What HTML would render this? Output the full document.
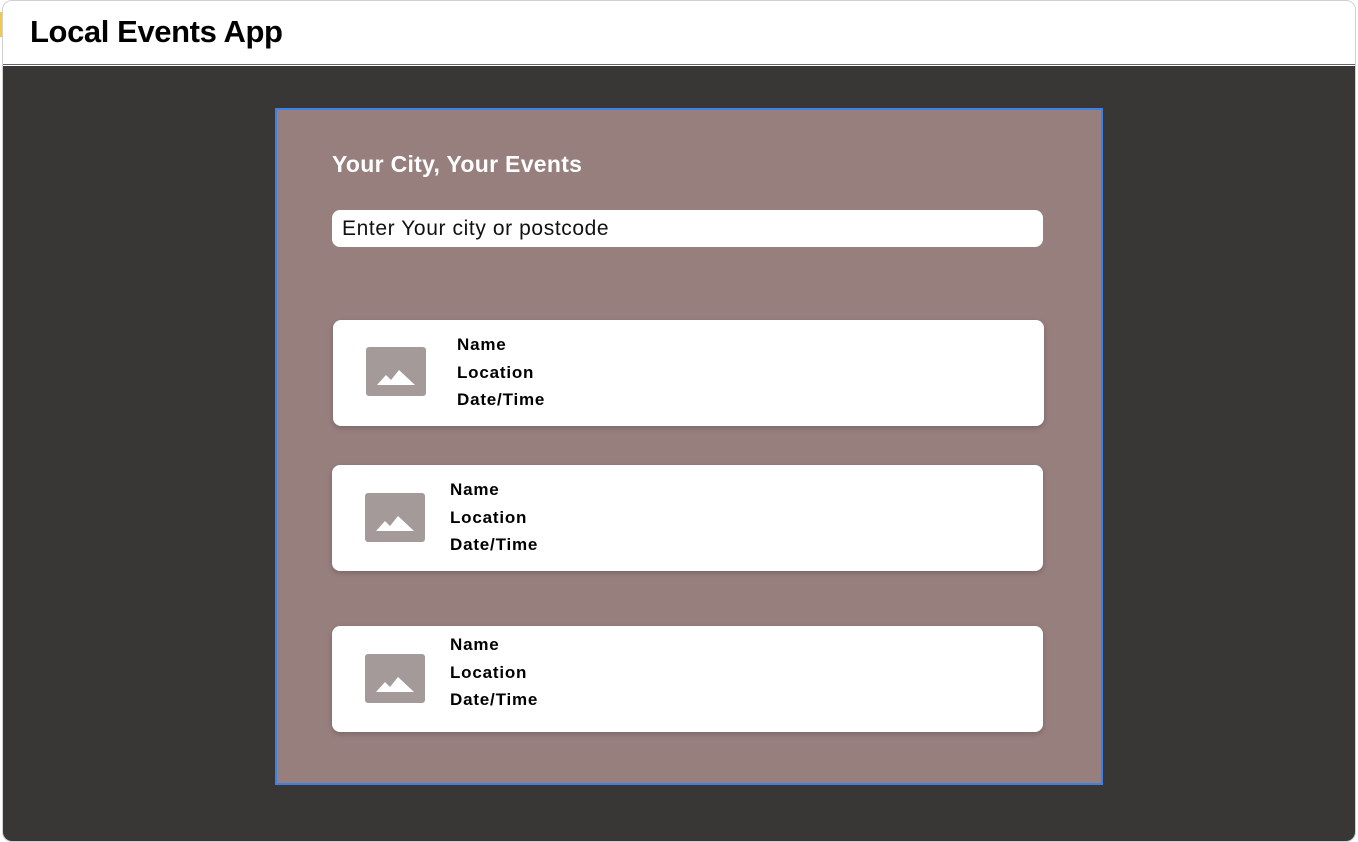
<!DOCTYPE html>
<html><head><style>
*{margin:0;padding:0;box-sizing:border-box}
body{width:1358px;height:842px;background:#fff;position:relative;overflow:hidden;font-family:"Liberation Sans",Roboto,sans-serif}
.frame{position:absolute;left:2px;top:0;width:1354px;height:842px;border:1px solid #d0d0d0;border-radius:10px;overflow:hidden;background:#fff}
.yellow{position:absolute;left:0;top:12px;width:3px;height:25px;background:#f5c842}
.hdr{position:absolute;left:0;top:0;width:100%;height:64px;background:#fff;border-bottom:1px solid #666}
.hdr h1{position:absolute;left:27px;top:13px;font-size:31px;font-weight:bold;color:#000;letter-spacing:-0.4px}
.dark{position:absolute;left:0;top:65px;width:100%;height:777px;background:#393735}
.panel{position:absolute;left:275px;top:108px;width:828px;height:677px;background:#977f7e;border:2px solid #3b82e8}
.title{position:absolute;left:332px;top:151px;color:#fff;font-size:23px;font-weight:bold;letter-spacing:0.3px}
.input{position:absolute;left:332px;top:210px;width:711px;height:37px;background:#fff;border-radius:8px;font-size:21px;color:#111;padding:7px 0 0 10px;letter-spacing:0.6px}
.card{position:absolute;width:711px;height:106px;background:#fff;border-radius:8px;box-shadow:0 2px 6px rgba(0,0,0,.2)}
.ic{position:absolute;left:33px;top:27px;width:60px;height:49px;background:#a49a99;border-radius:3px}
.ic svg{position:absolute;left:11px;top:20px}
.txt{position:absolute;font-size:17px;font-weight:bold;color:#000;line-height:27.5px;letter-spacing:0.8px}
</style></head><body>
<div class="yellow"></div>
<div class="frame">
<div class="hdr"><h1>Local Events App</h1></div>
<div class="dark"></div>
</div>
<div class="panel"></div>
<div class="title">Your City, Your Events</div>
<div class="input">Enter Your city or postcode</div>

<div class="card" style="left:333px;top:320px"><div class="ic"><svg width="38" height="18" viewBox="0 0 38 18"><path d="M0 18 L9 8 L14 13 L22 3 L38 18 Z" fill="#fff"/></svg></div><div class="txt" style="left:124px;top:11px">Name<br>Location<br>Date/Time</div></div>
<div class="card" style="left:332px;top:465px"><div class="ic" style="left:33px;top:28px"><svg width="38" height="18" viewBox="0 0 38 18"><path d="M0 18 L9 8 L14 13 L22 3 L38 18 Z" fill="#fff"/></svg></div><div class="txt" style="left:118px;top:11px">Name<br>Location<br>Date/Time</div></div>
<div class="card" style="left:332px;top:626px"><div class="ic" style="left:33px;top:28px"><svg width="38" height="18" viewBox="0 0 38 18"><path d="M0 18 L9 8 L14 13 L22 3 L38 18 Z" fill="#fff"/></svg></div><div class="txt" style="left:118px;top:5px">Name<br>Location<br>Date/Time</div></div>
</body></html>
